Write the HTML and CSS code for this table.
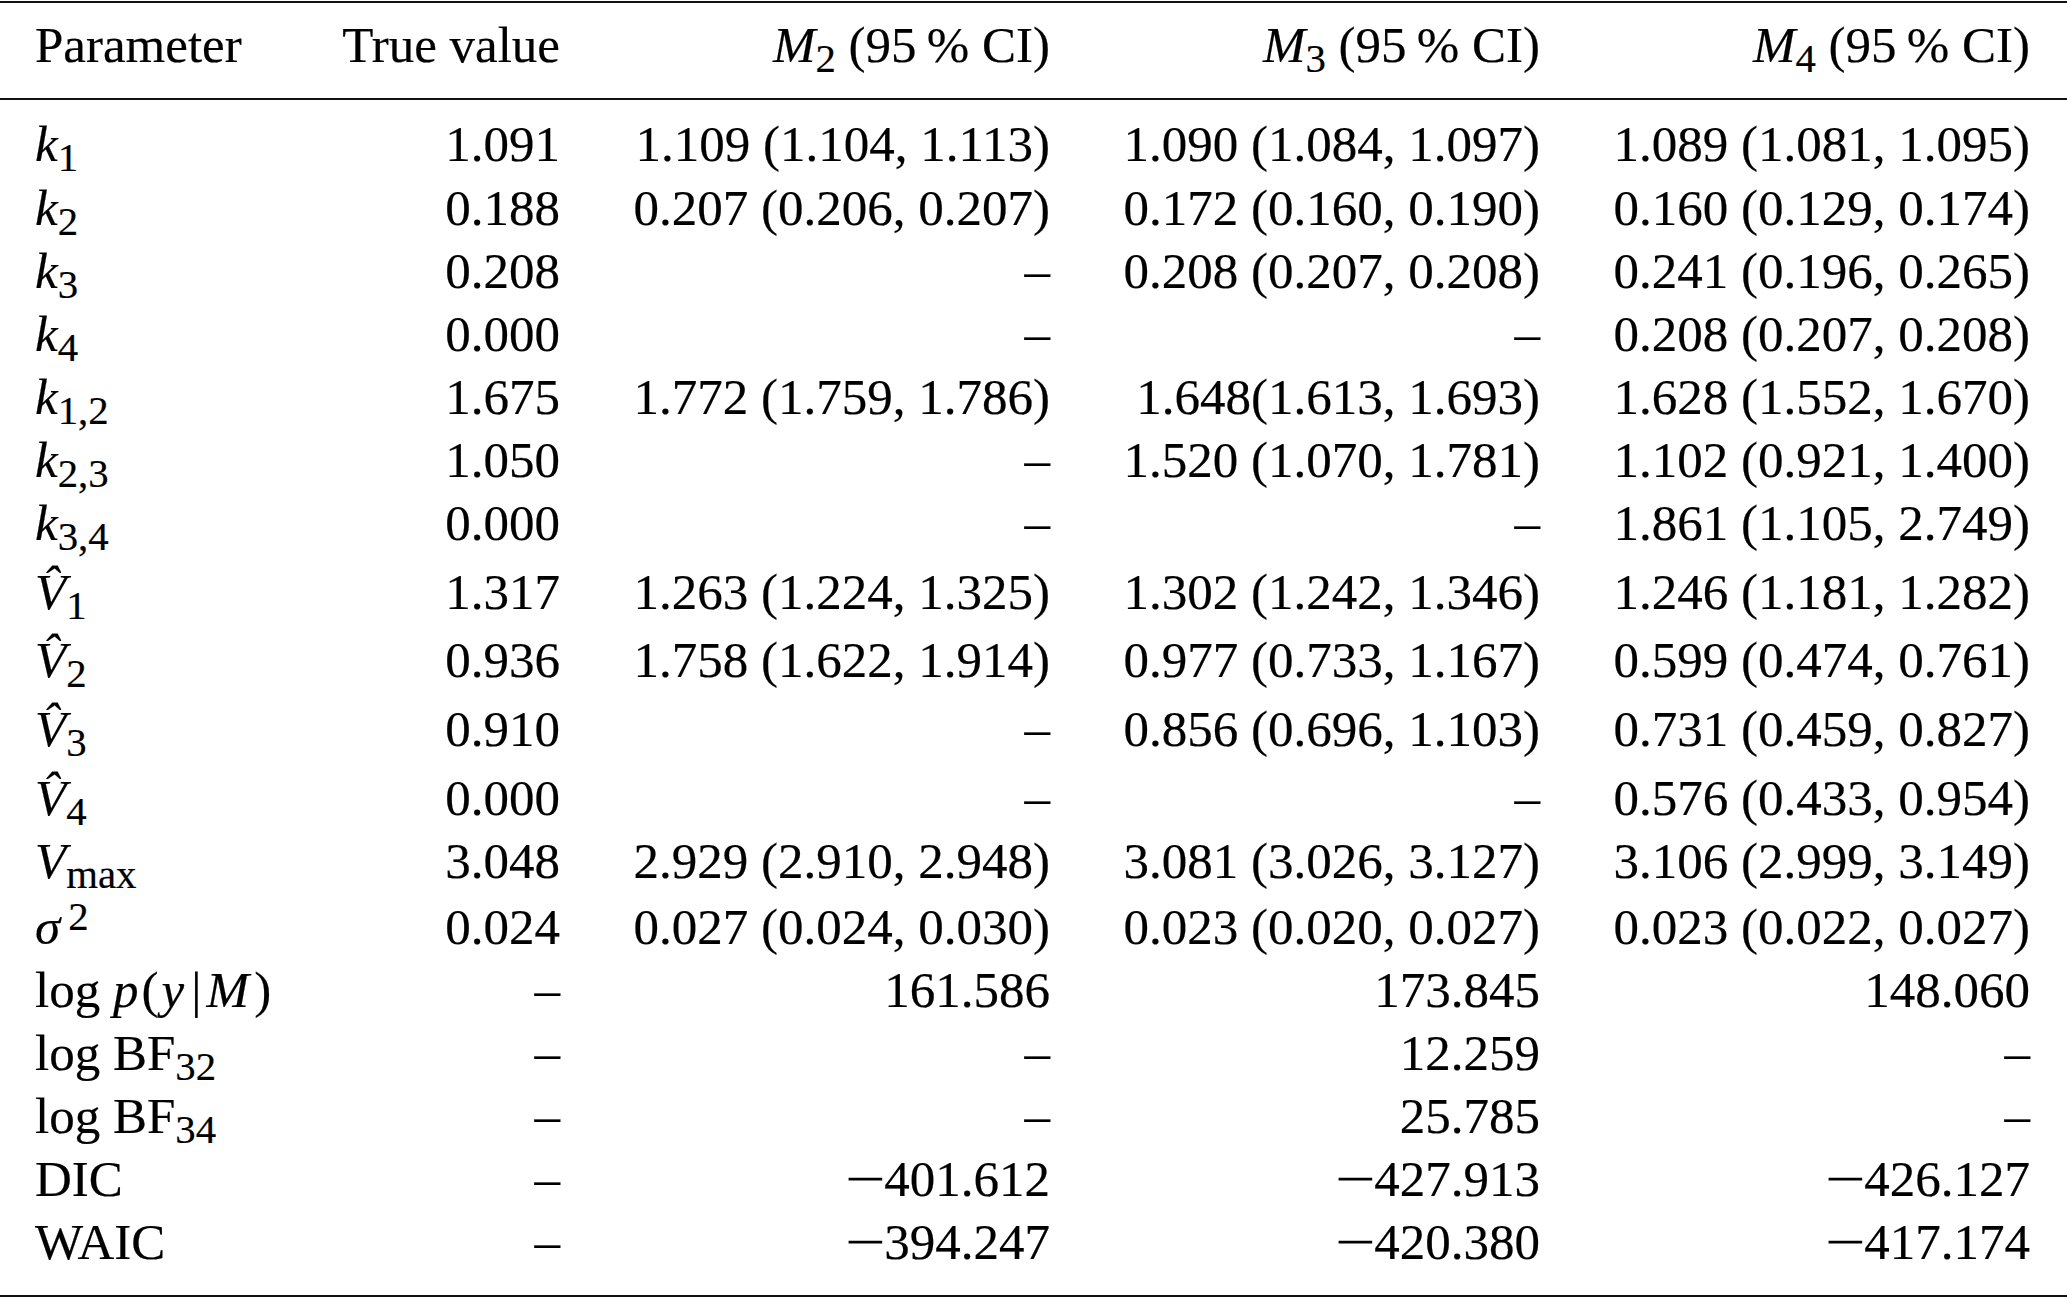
FILE: index.html
```html
<!DOCTYPE html>
<html lang="en">
<head>
<meta charset="utf-8">
<title>Parameter estimates</title>
<link rel="stylesheet" href="styles.css">
</head>
<body>
<div class="table">
  <div class="row head">
    <div class="cell">Parameter</div>
    <div class="cell">True value</div>
    <div class="cell"><span class="mi">M</span><span class="sub">2</span> (95&#8201;% CI)</div>
    <div class="cell"><span class="mi">M</span><span class="sub">3</span> (95&#8201;% CI)</div>
    <div class="cell"><span class="mi">M</span><span class="sub">4</span> (95&#8201;% CI)</div>
  </div>
  <div class="body">
    <div class="row">
      <div class="cell"><span class="mi">k</span><span class="sub">1</span></div>
      <div class="cell">1.091</div>
      <div class="cell">1.109 (1.104, 1.113)</div>
      <div class="cell">1.090 (1.084, 1.097)</div>
      <div class="cell">1.089 (1.081, 1.095)</div>
    </div>
    <div class="row">
      <div class="cell"><span class="mi">k</span><span class="sub">2</span></div>
      <div class="cell">0.188</div>
      <div class="cell">0.207 (0.206, 0.207)</div>
      <div class="cell">0.172 (0.160, 0.190)</div>
      <div class="cell">0.160 (0.129, 0.174)</div>
    </div>
    <div class="row">
      <div class="cell"><span class="mi">k</span><span class="sub">3</span></div>
      <div class="cell">0.208</div>
      <div class="cell">–</div>
      <div class="cell">0.208 (0.207, 0.208)</div>
      <div class="cell">0.241 (0.196, 0.265)</div>
    </div>
    <div class="row">
      <div class="cell"><span class="mi">k</span><span class="sub">4</span></div>
      <div class="cell">0.000</div>
      <div class="cell">–</div>
      <div class="cell">–</div>
      <div class="cell">0.208 (0.207, 0.208)</div>
    </div>
    <div class="row">
      <div class="cell"><span class="mi">k</span><span class="sub">1,2</span></div>
      <div class="cell">1.675</div>
      <div class="cell">1.772 (1.759, 1.786)</div>
      <div class="cell">1.648(1.613, 1.693)</div>
      <div class="cell">1.628 (1.552, 1.670)</div>
    </div>
    <div class="row">
      <div class="cell"><span class="mi">k</span><span class="sub">2,3</span></div>
      <div class="cell">1.050</div>
      <div class="cell">–</div>
      <div class="cell">1.520 (1.070, 1.781)</div>
      <div class="cell">1.102 (0.921, 1.400)</div>
    </div>
    <div class="row">
      <div class="cell"><span class="mi">k</span><span class="sub">3,4</span></div>
      <div class="cell">0.000</div>
      <div class="cell">–</div>
      <div class="cell">–</div>
      <div class="cell">1.861 (1.105, 2.749)</div>
    </div>
    <div class="row tall">
      <div class="cell"><span class="mi">V&#770;</span><span class="sub">1</span></div>
      <div class="cell">1.317</div>
      <div class="cell">1.263 (1.224, 1.325)</div>
      <div class="cell">1.302 (1.242, 1.346)</div>
      <div class="cell">1.246 (1.181, 1.282)</div>
    </div>
    <div class="row tall">
      <div class="cell"><span class="mi">V&#770;</span><span class="sub">2</span></div>
      <div class="cell">0.936</div>
      <div class="cell">1.758 (1.622, 1.914)</div>
      <div class="cell">0.977 (0.733, 1.167)</div>
      <div class="cell">0.599 (0.474, 0.761)</div>
    </div>
    <div class="row tall">
      <div class="cell"><span class="mi">V&#770;</span><span class="sub">3</span></div>
      <div class="cell">0.910</div>
      <div class="cell">–</div>
      <div class="cell">0.856 (0.696, 1.103)</div>
      <div class="cell">0.731 (0.459, 0.827)</div>
    </div>
    <div class="row tall">
      <div class="cell"><span class="mi">V&#770;</span><span class="sub">4</span></div>
      <div class="cell">0.000</div>
      <div class="cell">–</div>
      <div class="cell">–</div>
      <div class="cell">0.576 (0.433, 0.954)</div>
    </div>
    <div class="row vmax">
      <div class="cell"><span class="mi">V</span><span class="sub">max</span></div>
      <div class="cell">3.048</div>
      <div class="cell">2.929 (2.910, 2.948)</div>
      <div class="cell">3.081 (3.026, 3.127)</div>
      <div class="cell">3.106 (2.999, 3.149)</div>
    </div>
    <div class="row sigma">
      <div class="cell"><span class="mi">σ</span><span class="sup">2</span></div>
      <div class="cell">0.024</div>
      <div class="cell">0.027 (0.024, 0.030)</div>
      <div class="cell">0.023 (0.020, 0.027)</div>
      <div class="cell">0.023 (0.022, 0.027)</div>
    </div>
    <div class="row logp">
      <div class="cell">log <span class="mi gp">p</span><span class="gl">(</span><span class="mi gy">y</span><span class="gb">|</span><span class="mi gm">M</span>)</div>
      <div class="cell">–</div>
      <div class="cell">161.586</div>
      <div class="cell">173.845</div>
      <div class="cell">148.060</div>
    </div>
    <div class="row">
      <div class="cell">log BF<span class="sub">32</span></div>
      <div class="cell">–</div>
      <div class="cell">–</div>
      <div class="cell">12.259</div>
      <div class="cell">–</div>
    </div>
    <div class="row bf34">
      <div class="cell">log BF<span class="sub">34</span></div>
      <div class="cell">–</div>
      <div class="cell">–</div>
      <div class="cell">25.785</div>
      <div class="cell">–</div>
    </div>
    <div class="row dic">
      <div class="cell">DIC</div>
      <div class="cell">–</div>
      <div class="cell"><span class="minus">−</span>401.612</div>
      <div class="cell"><span class="minus">−</span>427.913</div>
      <div class="cell"><span class="minus">−</span>426.127</div>
    </div>
    <div class="row waic">
      <div class="cell">WAIC</div>
      <div class="cell">–</div>
      <div class="cell"><span class="minus">−</span>394.247</div>
      <div class="cell"><span class="minus">−</span>420.380</div>
      <div class="cell"><span class="minus">−</span>417.174</div>
    </div>
  </div>
</div>
</body>
</html>
```

FILE: styles.css
```css
html, body {
  margin: 0;
  padding: 0;
  background: #ffffff;
}

body {
  padding-top: 1px;
}

.table {
  width: 2067px;
  box-sizing: border-box;
  border-top: 2px solid #111111;
  border-bottom: 2px solid #111111;
  font-family: "Liberation Serif", "Times New Roman", serif;
  font-size: 51px;
  color: #000000;
  -webkit-text-stroke: 0.2px #000000;
}

.row {
  display: grid;
  grid-template-columns: 290px 235px 490px 490px 490px;
  padding: 0 37px 0 35px;
  height: 63.1px;
  align-items: end;
  line-height: 63px;
}

.head {
  height: auto;
  padding-top: 11px;
  padding-bottom: 21px;
  border-bottom: 2px solid #111111;
}

.body {
  padding-top: 13.4px;
  padding-bottom: 21.1px;
}

.cell {
  white-space: nowrap;
  text-align: right;
}

.cell:first-child {
  text-align: left;
}

.tall { height: 68.7px; }
.vmax { height: 61.5px; }
.sigma { height: 68px; }
.logp { height: 62.2px; }
.bf34 { height: 63.5px; }
.dic { height: 62.5px; }
.waic { height: 63.3px; }

.mi {
  font-style: italic;
}

.sub {
  font-size: 0.8em;
  vertical-align: -0.25em;
  line-height: 0;
  font-style: normal;
}

.sup {
  font-size: 0.8em;
  vertical-align: 0.36em;
  line-height: 0;
  margin-left: 0.2em;
  font-style: normal;
}

.gp { margin-right: 0.06em; }
.gl { margin-right: 0.06em; }
.gy { margin-right: 0.14em; }
.gb { margin-right: 0.1em; }
.gm { margin-right: 0.1em; }

.minus {
  display: inline-block;
  transform: scaleX(1.4);
  transform-origin: 100% 50%;
  margin-right: -2px;
}
```
